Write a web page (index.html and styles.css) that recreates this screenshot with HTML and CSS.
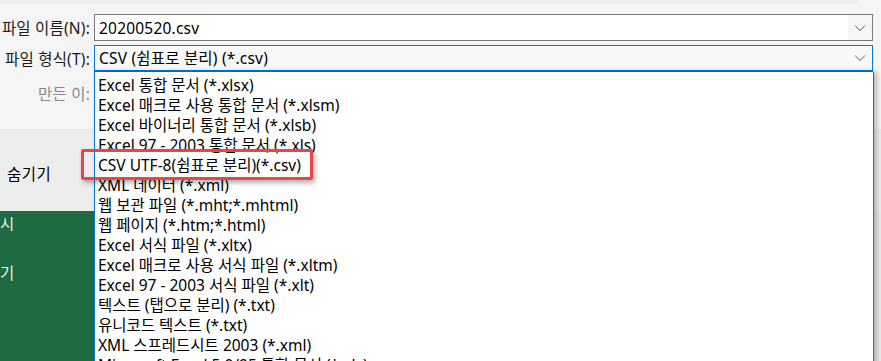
FILE: index.html
```html
<!DOCTYPE html>
<html lang="ko">
<head>
  <meta charset="UTF-8" />
  <title>다른 이름으로 저장</title>
  <link rel="stylesheet" href="styles.css">
</head>
<body>
  <div class="screen">
    <div class="topbar"></div>

    <div class="form">
      <div class="row">
        <label class="label" for="file_name">파일 이름(N):</label>
        <div class="field">
          <input id="file_name" class="text" value="20200520.csv">
          <span class="drop"><svg width="12" height="8" viewBox="0 0 12 8"><path d="M1 1.5 L6 6.5 L11 1.5" fill="none" stroke="#555" stroke-width="1"/></svg></span>
        </div>
      </div>
      <div class="row">
        <label class="label">파일 형식(T):</label>
        <div class="field combo">
          <span class="text">CSV (쉼표로 분리) (*.csv)</span>
          <span class="drop"><svg width="12" height="8" viewBox="0 0 12 8"><path d="M1 1.5 L6 6.5 L11 1.5" fill="none" stroke="#555" stroke-width="1"/></svg></span>
        </div>
      </div>
      <div class="row author">
        <span class="label muted">만든 이:</span>
      </div>
    </div>

    <div class="band">
      <span class="hide">숨기기</span>
    </div>

    <div class="backstage">
      <div class="green">
        <span class="g1">시</span>
        <span class="g2">기</span>
      </div>
      <div class="shade"></div>
    </div>

    <ul class="list">
      <li>Excel 통합 문서 (*.xlsx)</li>
      <li>Excel 매크로 사용 통합 문서 (*.xlsm)</li>
      <li>Excel 바이너리 통합 문서 (*.xlsb)</li>
      <li>Excel 97 - 2003 통합 문서 (*.xls)</li>
      <li>CSV UTF-8(쉼표로 분리)(*.csv)</li>
      <li>XML 데이터 (*.xml)</li>
      <li>웹 보관 파일 (*.mht;*.mhtml)</li>
      <li>웹 페이지 (*.htm;*.html)</li>
      <li>Excel 서식 파일 (*.xltx)</li>
      <li>Excel 매크로 사용 서식 파일 (*.xltm)</li>
      <li>Excel 97 - 2003 서식 파일 (*.xlt)</li>
      <li>텍스트 (탭으로 분리) (*.txt)</li>
      <li>유니코드 텍스트 (*.txt)</li>
      <li>XML 스프레드시트 2003 (*.xml)</li>
      <li>Microsoft Excel 5.0/95 통합 문서 (*.xls)</li>
    </ul>

    <div class="mark"></div>
  </div>
</body>
</html>
```

FILE: styles.css
```css
body {
  margin: 0;
  font-family: "Noto Sans", "Noto Sans CJK KR", sans-serif;
  font-size: 15.5px;
  color: #000;
  background: #f5f5f5;
}

.screen {
  position: relative;
  width: 881px;
  height: 361px;
  overflow: hidden;
  background: #f5f5f5;
}

.topbar {
  height: 4px;
  width: 858px;
  background: #efefef;
}

.form {
  padding-top: 10px;
  display: flex;
  flex-direction: column;
  gap: 4px;
}

.row {
  display: flex;
  align-items: center;
  height: 27px;
}

.label {
  width: 90px;
  padding-right: 4px;
  text-align: right;
  white-space: nowrap;
  color: #1a1a1a;
  letter-spacing: 0.2px;
}

.muted {
  color: #8a8a8a;
}

.author {
  margin-top: 4px;
}

.field {
  display: flex;
  align-items: center;
  width: 779px;
  height: 27px;
  box-sizing: border-box;
  border: 1px solid #7a7a7a;
  background: #fff;
}

.field .text {
  flex: 1;
  border: none;
  outline: none;
  padding: 0 0 0 4px;
  height: 100%;
  line-height: 25px;
  font: inherit;
  letter-spacing: 0.2px;
  background: transparent;
}

.drop {
  width: 24px;
  height: 100%;
  display: flex;
  align-items: center;
  justify-content: center;
  background: #f5f5f5;
}

.combo {
  border-color: #0078d7;
  border-bottom-width: 2px;
  background: #f8f8f8;
}

.combo .drop {
  background: transparent;
}

.band {
  margin-top: 22px;
  height: 82px;
  background: #ededed;
  padding-left: 7px;
  box-sizing: border-box;
  padding-top: 33px;
  letter-spacing: 0.5px;
}

.backstage {
  display: flex;
  height: 154px;
}

.green {
  width: 95px;
  background: #1e6b41;
  color: #e6efe9;
  display: flex;
  flex-direction: column;
  padding-top: 3px;
  box-sizing: border-box;
}

.g1 {
  line-height: 20px;
}

.g2 {
  margin-top: 29px;
  line-height: 20px;
}

.shade {
  flex: 1;
  background: #ebebeb;
}

/* open dropdown of the file type box */
.list {
  position: absolute;
  left: 94px;
  top: 72px;
  width: 780px;
  height: 300px;
  margin: 0;
  padding: 3px 0 0 3px;
  box-sizing: border-box;
  list-style: none;
  background: #fff;
  border-left: 1px solid #0078d7;
  border-right: 1px solid #0078d7;
  box-shadow: 3px 0 5px rgba(0, 0, 0, 0.25);
}

.list li {
  height: 20px;
  line-height: 20px;
  white-space: nowrap;
}

.mark {
  position: absolute;
  left: 81px;
  top: 149px;
  width: 232px;
  height: 31px;
  box-sizing: border-box;
  border: 3px solid #e84646;
  border-radius: 2px;
  box-shadow: 2px 3px 5px rgba(0, 0, 0, 0.3);
}
```
